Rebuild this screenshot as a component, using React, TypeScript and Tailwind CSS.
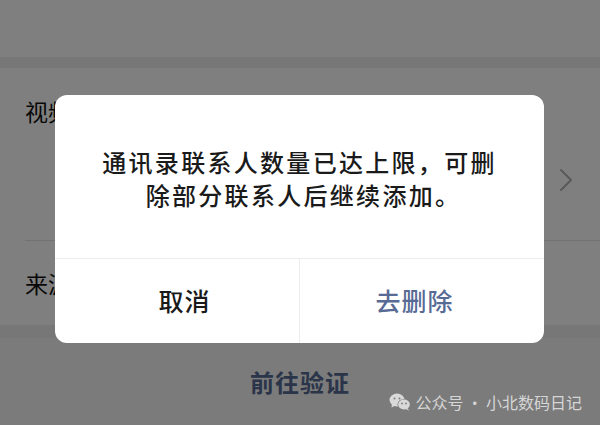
import React from "react";

function Chevron() {
  return (
    <svg width="14" height="24" viewBox="0 0 14 24" fill="none">
      <path d="M2 2 L12 12 L2 22" stroke="#b3b3b3" strokeWidth="2" strokeLinecap="round" strokeLinejoin="round" />
    </svg>
  );
}

function WeChatIcon() {
  return (
    <svg width="22" height="18" viewBox="0 0 22 18">
      <ellipse cx="8" cy="7" rx="7.5" ry="6.5" fill="#d9d9d9" />
      <path d="M3 11 L2.5 14.5 L6.5 12.5 Z" fill="#d9d9d9" />
      <circle cx="5.5" cy="5.5" r="1" fill="#7d7d7d" />
      <circle cx="10.5" cy="5.5" r="1" fill="#7d7d7d" />
      <ellipse cx="15" cy="11.5" rx="6.5" ry="5.5" fill="#7d7d7d" />
      <ellipse cx="15" cy="11.5" rx="5.8" ry="4.9" fill="#d9d9d9" />
      <path d="M18.5 15 L20 17.5 L16.5 16 Z" fill="#d9d9d9" />
      <circle cx="13" cy="10.5" r="0.9" fill="#7d7d7d" />
      <circle cx="17" cy="10.5" r="0.9" fill="#7d7d7d" />
    </svg>
  );
}

export default function App() {
  return (
    <div
      className="relative w-[600px] h-[425px] overflow-hidden"
      style={{ fontFamily: '"Noto Sans CJK SC", "Noto Sans", sans-serif' }}
    >
      {/* underlying page */}
      <div className="flex flex-col h-full bg-[#eeeeee]">
        <div className="h-[57px] bg-white shrink-0" />
        <div className="h-[11px] shrink-0" />
        <div className="bg-white h-[257px] shrink-0 flex flex-col">
          <div className="h-[172px] flex items-start justify-between pl-[25px] pr-[27px]">
            <div className="pt-[28px] text-[23px] leading-[30px] text-[#111]">视频号</div>
            <div className="mt-[100px]">
              <Chevron />
            </div>
          </div>
          <div className="ml-[25px] h-px bg-[#e5e5e5]" />
          <div className="flex-1 flex items-center pl-[25px] text-[23px] leading-[30px] text-[#111]">
            来源
          </div>
        </div>
        <div className="h-[13px] shrink-0" />
        <div className="flex-1 bg-[#f7f7f7] flex items-center justify-center">
          <span className="text-[24px] tracking-[1px] font-bold text-[#576b95]">前往验证</span>
        </div>
      </div>

      {/* mask */}
      <div className="absolute inset-0 bg-black/50" />

      {/* dialog */}
      <div className="absolute left-[55px] top-[95px] w-[489px] h-[248px] rounded-[12px] bg-white flex flex-col overflow-hidden">
        <div className="h-[163px] flex items-center justify-center text-center text-[24px] leading-[33px] tracking-[2.3px] font-medium text-[#1a1a1a] pt-[2px]">
          <div>
            通讯录联系人数量已达上限，可删
            <br />
            <span className="pl-[8px]">除部分联系人后继续添加。</span>
          </div>
        </div>
        <div className="h-px bg-[#ececec]" />
        <div className="flex-1 flex">
          <div className="flex-1 flex items-center justify-center pl-[15px] text-[25px] tracking-[1px] font-medium text-[#1a1a1a]">
            取消
          </div>
          <div className="w-px bg-[#ececec]" />
          <div className="flex-1 flex items-center justify-center pr-[15px] text-[25px] tracking-[1px] font-medium text-[#576b95]">
            去删除
          </div>
        </div>
      </div>

      {/* watermark */}
      <div className="absolute right-[18px] bottom-[13px] flex items-center gap-[5px] text-[16px] leading-[20px] text-[#d6d6d6]">
        <WeChatIcon />
        <span>公众号&thinsp;·&thinsp;小北数码日记</span>
      </div>
    </div>
  );
}
